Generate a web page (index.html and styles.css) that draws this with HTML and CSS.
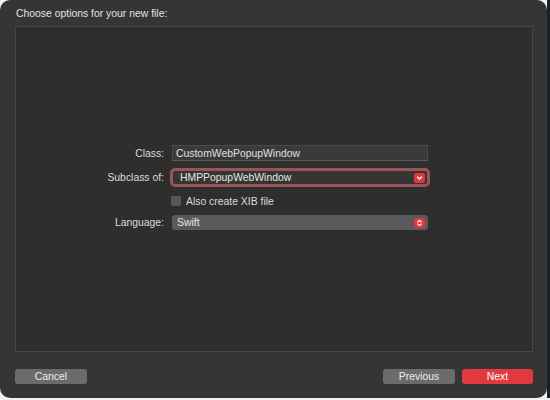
FILE: index.html
```html
<!DOCTYPE html>
<html>
<head>
<meta charset="utf-8">
<link rel="stylesheet" href="styles.css">
</head>
<body>
<div class="window">
  <div class="title">Choose options for your new file:</div>
  <div class="panel">
    <div class="form">
      <div class="label r-class">Class:</div>
      <div class="field">CustomWebPopupWindow</div>
      <div class="label r-sub">Subclass of:</div>
      <div class="popup focus">
        <span>HMPPopupWebWindow</span>
        <span class="arrow">
          <svg width="11" height="10" viewBox="0 0 11 10"><path d="M3.5 4 L5.5 6 L7.5 4" fill="none" stroke="#fff" stroke-width="1.2" stroke-linecap="round" stroke-linejoin="round"/></svg>
        </span>
      </div>
      <div class="spacer"></div>
      <label class="check"><span class="box"></span><span>Also create XIB file</span></label>
      <div class="label r-lang">Language:</div>
      <div class="popup lang">
        <span>Swift</span>
        <span class="arrow">
          <svg width="11" height="10" viewBox="0 0 11 10"><path d="M3.7 4 L5.5 2.3 L7.3 4 M3.7 6 L5.5 7.7 L7.3 6" fill="none" stroke="#fff" stroke-width="1.1" stroke-linecap="round" stroke-linejoin="round"/></svg>
        </span>
      </div>
    </div>
  </div>
  <div class="footer">
    <button class="btn">Cancel</button>
    <div class="grow"></div>
    <button class="btn">Previous</button>
    <button class="btn primary">Next</button>
  </div>
</div>
</body>
</html>
```
FILE: styles.css
```css
html, body {
  margin: 0;
  padding: 0;
}
body {
  width: 550px;
  height: 400px;
  background: linear-gradient(#1c1f24, #1c1f24) right top / 3px 398px no-repeat, #f2f2f2;
  font-family: "Liberation Sans", Arial, sans-serif;
  color: #dcdcdc;
  overflow: hidden;
}
.window {
  width: 547px;
  height: 398px;
  background: #353535;
  border-radius: 10px;
  display: flex;
  flex-direction: column;
  box-sizing: border-box;
}
.title {
  height: 26px;
  line-height: 28px;
  padding-left: 16px;
  font-size: 10.4px;
  color: #e2e2e2;
  box-sizing: border-box;
}
.panel {
  margin: 0 14px 0 15px;
  height: 326px;
  border: 1px solid #474747;
  background: #2e2e2e;
  box-sizing: border-box;
  padding: 118px 0 0 68px;
}
.form {
  display: grid;
  grid-template-columns: 80px 257px;
  column-gap: 7px;
  align-items: center;
  font-size: 10.4px;
}
.label {
  text-align: right;
  color: #dcdcdc;
}
.field {
  height: 16px;
  line-height: 16px;
  background: #3a3a3a;
  border: 1px solid #4a4a4a;
  border-bottom-color: #5a5a5a;
  box-sizing: border-box;
  padding-left: 3px;
  margin-left: 1px;
  color: #e0e0e0;
}
.popup {
  position: relative;
  display: flex;
  align-items: center;
  justify-content: space-between;
  box-sizing: border-box;
  color: #e6e6e6;
}
.popup.focus {
  height: 19px;
  margin-top: 7px;
  margin-left: -1px;
  width: 260px;
  border: 3px solid #9b5459;
  border-radius: 5px;
  background: #353535;
  padding: 0 2px 0 7px;
}
.popup.lang {
  height: 15px;
  margin-top: 9px;
  margin-left: 1px;
  background: #5a5a5a;
  border-radius: 3px;
  padding: 0 3px 0 5px;
}
.r-sub { margin-top: 7px; }
.r-lang { margin-top: 9px; }
.arrow {
  width: 11px;
  height: 10px;
  background: #e0383e;
  border-radius: 2px;
  display: flex;
}
.spacer { height: 10px; margin-top: 9px; }
.check {
  display: flex;
  align-items: center;
  gap: 5px;
  margin-top: 9px;
  height: 10px;
  color: #dcdcdc;
}
.box {
  width: 10px;
  height: 10px;
  background: #575757;
  border-radius: 2px;
}
.footer {
  display: flex;
  align-items: flex-start;
  gap: 7px;
  padding: 17px 14px 0 15px;
}
.grow { flex: 1; }
.btn {
  width: 72px;
  height: 15px;
  border: none;
  border-radius: 3px;
  background: #6b6b6b;
  color: #ececec;
  font-family: "Liberation Sans", Arial, sans-serif;
  font-size: 10.4px;
  padding: 0;
  line-height: 15px;
}
.btn.primary {
  width: 71px;
  background: #e1393f;
  color: #fff;
}
```
